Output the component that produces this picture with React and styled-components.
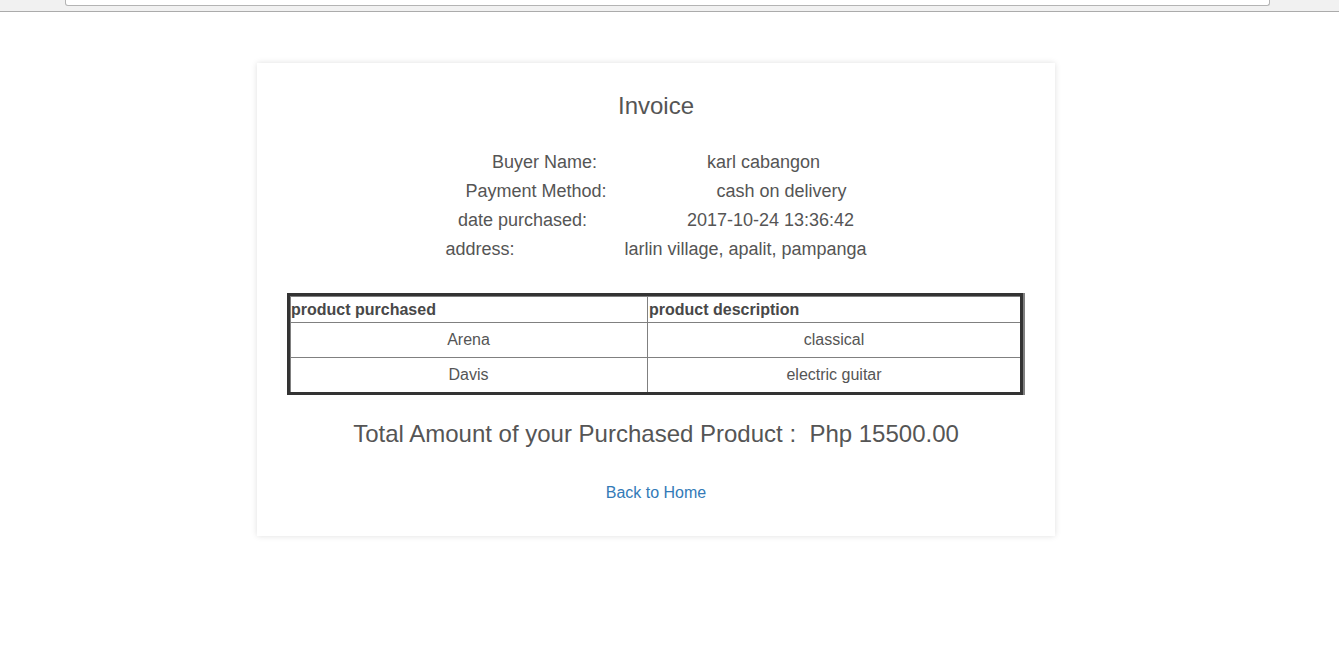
import React from 'react'
import styled, { createGlobalStyle } from 'styled-components'

const GlobalStyle = createGlobalStyle`
    body {
        margin: 0;
        background: #fff;
        font-family: "Liberation Sans", Arial, Helvetica, sans-serif;
        color: #555;
    }
`;

const info = [
    { label: 'Buyer Name:', value: 'karl cabangon', gap: 110 },
    { label: 'Payment Method:', value: 'cash on delivery', gap: 110 },
    { label: 'date purchased:', value: '2017-10-24 13:36:42', gap: 100 },
    { label: 'address:', value: 'larlin village, apalit, pampanga', gap: 110 },
];

const products = [
    { name: 'Arena', desc: 'classical' },
    { name: 'Davis', desc: 'electric guitar' },
];

const App = () => {
  return (
    <>
        <GlobalStyle />
        <BrowserBar>
            <AddressField />
        </BrowserBar>
        <Page>
            <InvoiceCard>
                <Title>Invoice</Title>
                <InfoList>
                    {info.map((row) => (
                        <InfoRow key={row.label} $gap={row.gap}>
                            <span>{row.label}</span>
                            <span>{row.value}</span>
                        </InfoRow>
                    ))}
                </InfoList>
                <ProductTable>
                    <thead>
                        <tr>
                            <HeadCell $first>product purchased</HeadCell>
                            <HeadCell>product description</HeadCell>
                        </tr>
                    </thead>
                    <tbody>
                        {products.map((p) => (
                            <tr key={p.name}>
                                <BodyCell>{p.name}</BodyCell>
                                <BodyCell>{p.desc}</BodyCell>
                            </tr>
                        ))}
                    </tbody>
                </ProductTable>
                <Total>Total Amount of your Purchased Product :&nbsp; Php 15500.00</Total>
                <Footer>
                    <BackLink href="#">Back to Home</BackLink>
                </Footer>
            </InvoiceCard>
        </Page>
    </>
  )
}

const BrowserBar = styled.div`
    height: 11px;
    background: #f1f1f1;
    border-bottom: 1px solid #ababab;
`;

const AddressField = styled.div`
    margin-left: 65px;
    width: 1203px;
    height: 5px;
    background: #fff;
    border: 1px solid #b4b4b4;
    border-top: none;
    border-radius: 0 0 3px 3px;
`;

const Page = styled.div`
    width: 1312px;
    padding-top: 51px;
    padding-bottom: 20px;
`;

const InvoiceCard = styled.div`
    width: 798px;
    box-sizing: border-box;
    margin: 0 auto;
    padding: 29px 30px 31px;
    background: #fff;
    box-shadow: 0 0 6px rgba(0, 0, 0, 0.13);
    text-align: center;
`;

const Title = styled.h2`
    margin: 0;
    font-size: 24px;
    font-weight: normal;
    line-height: 27.6px;
    color: #555;
`;

const InfoList = styled.div`
    margin-top: 28px;
`;

const InfoRow = styled.div`
    display: flex;
    justify-content: center;
    gap: ${(p) => p.$gap}px;
    font-size: 18px;
    line-height: 29px;
    color: #555;
`;

const ProductTable = styled.table`
    width: calc(100% - 2px);
    margin-top: 29px;
    border: 3px solid #333;
    border-collapse: separate;
    border-spacing: 0;
    box-shadow: 2px 0 0 #808080;
    font-size: 16px;
    color: #555;
`;

const HeadCell = styled.th`
    width: ${(p) => (p.$first ? '355px' : 'auto')};
    padding: 1px 1px 0;
    line-height: 24px;
    text-align: left;
    font-weight: bold;
    color: #484848;
    border-left: ${(p) => (p.$first ? 'none' : '1px solid #808080')};
    border-top: 1px solid #808080;
    box-shadow: ${(p) => (p.$first ? 'inset 1px 0 0 #808080' : 'none')};
`;

const BodyCell = styled.td`
    padding: 6px;
    line-height: 22px;
    text-align: center;
    border-top: 1px solid #808080;
    border-left: 1px solid #808080;

    &:first-child {
        border-left: none;
        box-shadow: inset 1px 0 0 #808080;
    }
`;

const Total = styled.p`
    margin: 25px 0 0;
    font-size: 24px;
    line-height: 27.6px;
    color: #555;
`;

const Footer = styled.div`
    margin-top: 35px;
`;

const BackLink = styled.a`
    font-size: 16px;
    line-height: 22.8px;
    color: #337ab7;
    text-decoration: none;
`;

export default App
